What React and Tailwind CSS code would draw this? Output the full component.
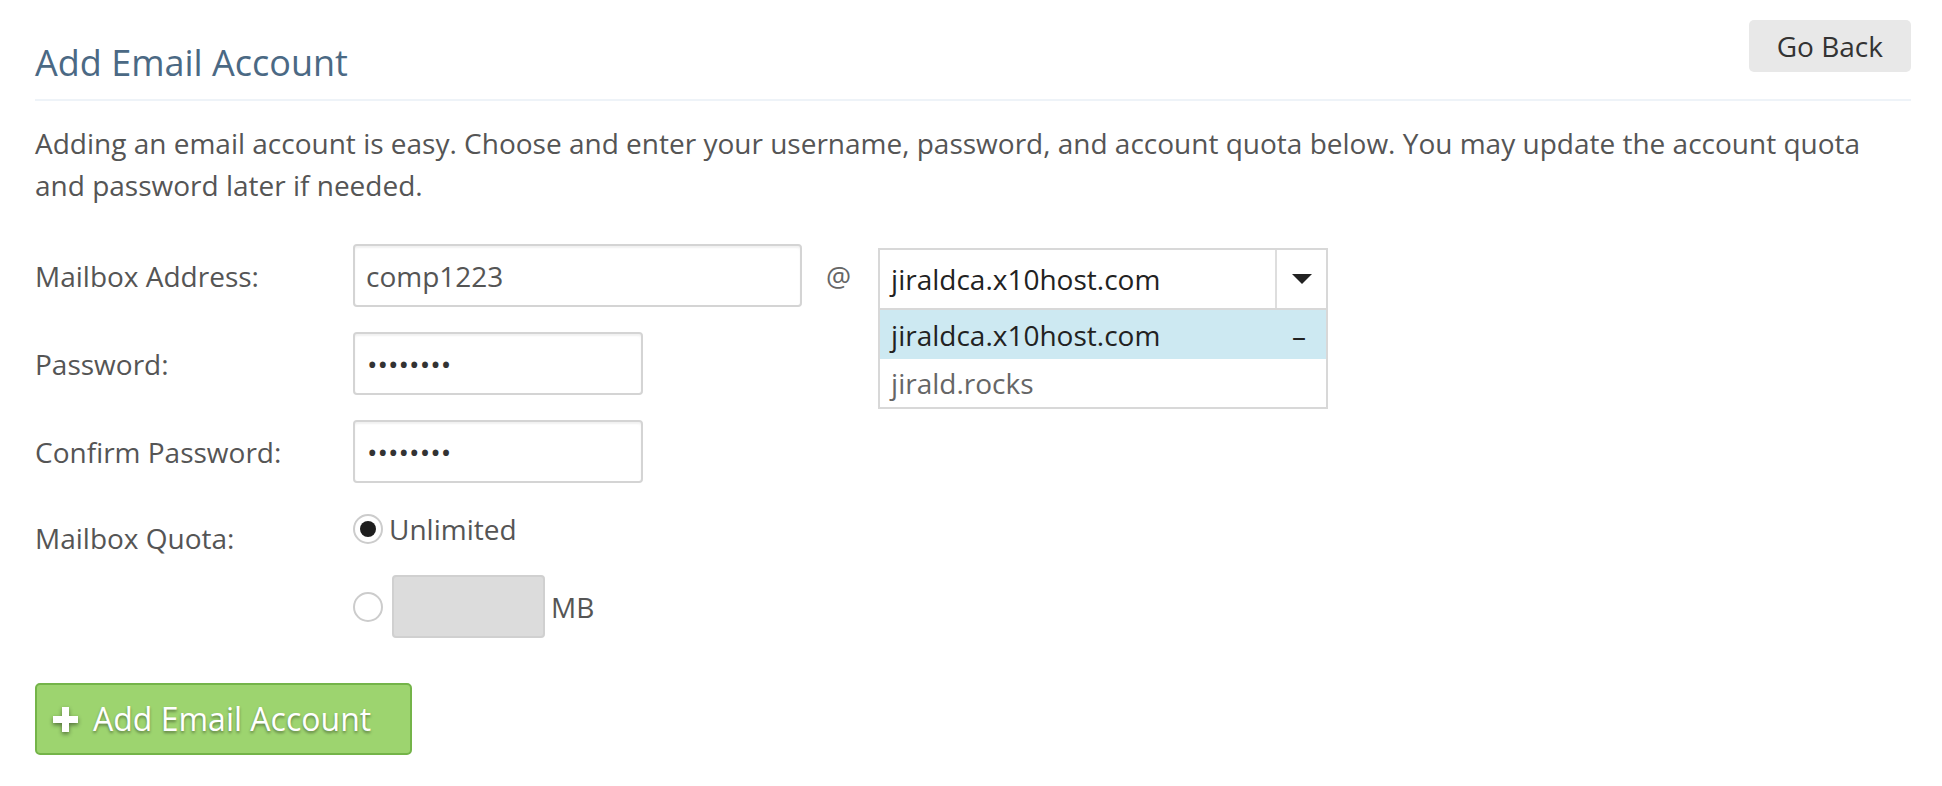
import React from "react";

function Radio({ checked }) {
  return (
    <span className="flex h-[30px] w-[30px] shrink-0 items-center justify-center rounded-full border-2 border-[#cccccc] bg-white">
      {checked && <span className="h-[16px] w-[16px] rounded-full bg-[#1e1e1e]" />}
    </span>
  );
}

function PlusIcon() {
  return (
    <svg width="25" height="25" viewBox="0 0 25 25" className="drop-shadow-[0_2px_2px_rgba(0,0,0,0.45)]">
      <rect x="9" y="0" width="7" height="25" fill="#fff" />
      <rect x="0" y="9" width="25" height="7" fill="#fff" />
    </svg>
  );
}

export default function App() {
  return (
    <div className="min-h-[786px] bg-white pl-[35px] pr-[31px] font-['Open_Sans',sans-serif] text-[28px] text-[#555]">
      <div className="flex h-[101px] items-start justify-between border-b-2 border-[#eef3f8]">
        <h1 className="mt-[38px] text-[36px] leading-[49px] font-normal text-[#4b6984]">Add Email Account</h1>
        <button className="mt-[20px] h-[52px] rounded-[5px] bg-[#e8e8e8] px-[28px] text-[28px] leading-[52px] text-[#333]">
          Go Back
        </button>
      </div>

      <p className="mt-[21px] leading-[42px]">
        Adding an email account is easy. Choose and enter your username, password, and account quota below. You may
        update the account quota and password later if needed.
      </p>

      <div className="mt-[38px] flex flex-col gap-[25px]">
        <div className="flex h-[63px] items-center">
          <label className="w-[318px] shrink-0 leading-[38px]">Mailbox Address:</label>
          <input
            defaultValue="comp1223"
            className="h-[63px] w-[449px] rounded-[4px] border-2 border-[#d4d4d4] px-[11px] text-[#555] shadow-[inset_0_2px_2px_rgba(0,0,0,0.06)] outline-none"
          />
          <span className="ml-[24px] text-[28px] leading-[38px] text-[#666]">@</span>
          <div className="relative mt-[4px] ml-[27px] w-[450px] self-start">
            <div className="flex h-[62px] border-2 border-[#d8d8d8] bg-white">
              <div className="flex-1 pl-[11px] leading-[58px] text-[#222]">jiraldca.x10host.com</div>
              <div className="flex w-[51px] items-center justify-center border-l-2 border-[#dedede]">
                <svg width="20" height="10" viewBox="0 0 20 10">
                  <polygon points="0,0 20,0 10,10" fill="#222" />
                </svg>
              </div>
            </div>
            <div className="absolute top-full left-0 w-full border-2 border-t-0 border-[#d8d8d8] bg-white">
              <div className="flex h-[49px] items-center justify-between bg-[#cde9f2] pr-[20px] pl-[11px] text-[#222]">
                <span>jiraldca.x10host.com</span>
                <span>–</span>
              </div>
              <div className="flex h-[48px] items-center pl-[11px] text-[#666]">jirald.rocks</div>
            </div>
          </div>
        </div>

        <div className="flex items-center">
          <label className="w-[318px] shrink-0 leading-[38px]">Password:</label>
          <input
            type="password"
            defaultValue="12345678"
            className="h-[63px] w-[290px] rounded-[4px] border-2 border-[#d4d4d4] px-[12px] text-[#333] shadow-[inset_0_2px_2px_rgba(0,0,0,0.06)] outline-none"
          />
        </div>

        <div className="flex items-center">
          <label className="w-[318px] shrink-0 leading-[38px]">Confirm Password:</label>
          <input
            type="password"
            defaultValue="12345678"
            className="h-[63px] w-[290px] rounded-[4px] border-2 border-[#d4d4d4] px-[12px] text-[#333] shadow-[inset_0_2px_2px_rgba(0,0,0,0.06)] outline-none"
          />
        </div>
      </div>

      <div className="mt-[27px] flex items-start">
        <div className="w-[318px] shrink-0 pt-[9px] leading-[38px]">Mailbox Quota:</div>
        <div className="flex flex-col">
          <div className="flex h-[38px] items-center gap-[6px]">
            <Radio checked />
            <span className="leading-[38px]">Unlimited</span>
          </div>
          <div className="mt-[27px] flex items-center">
            <Radio />
            <input
              disabled
              className="ml-[9px] h-[63px] w-[153px] rounded-[4px] border-2 border-[#d0d0d0] bg-[#dcdcdc]"
            />
            <span className="ml-[6px] leading-[38px]">MB</span>
          </div>
        </div>
      </div>

      <button className="mt-[45px] flex h-[72px] w-[377px] items-center gap-[15px] rounded-[5px] border-2 border-[#74b449] bg-[#9dd46f] pl-[16px] text-[32px] text-white [text-shadow:0_2px_3px_rgba(0,0,0,0.4)]">
        <PlusIcon />
        <span>Add Email Account</span>
      </button>
    </div>
  );
}
